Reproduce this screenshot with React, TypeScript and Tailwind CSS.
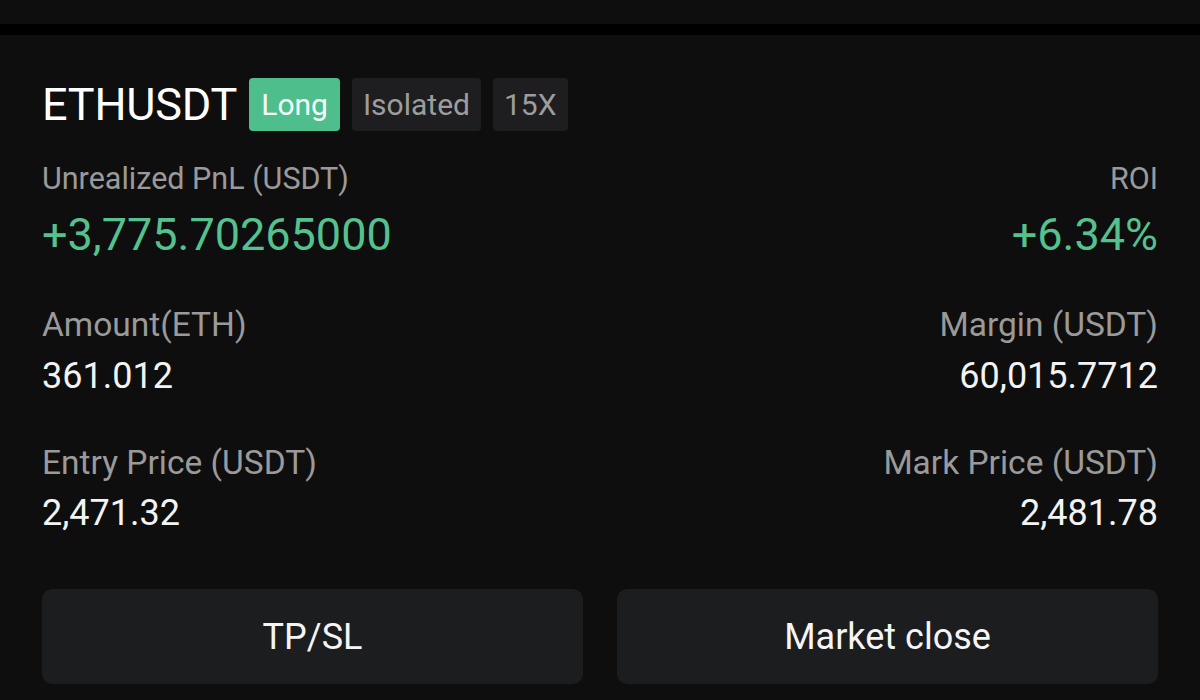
import React from "react";

const F = { fontFamily: "Roboto, 'Noto Sans', sans-serif" };

function Stat({
  label,
  value,
  right,
  green,
  big,
  labelCls,
  gapCls,
}: {
  label: string;
  value: string;
  right?: boolean;
  green?: boolean;
  big?: boolean;
  labelCls: string;
  gapCls: string;
}) {
  return (
    <div className={`flex flex-col ${right ? "items-end" : "items-start"}`}>
      <div className={`${labelCls} text-[#9a9a9a] whitespace-nowrap`}>{label}</div>
      <div
        className={`${big ? "text-[45px] leading-[50px]" : "text-[36px] leading-[42px]"} ${gapCls} ${
          green ? "text-[#54c18f]" : "text-[#f3f3f3]"
        } whitespace-nowrap`}
      >
        {value}
      </div>
    </div>
  );
}

export default function App() {
  return (
    <div className="w-[1200px] h-[700px] bg-[#0e0e0e] overflow-hidden flex flex-col" style={F}>
      <div className="h-[24px] bg-[#0e0e0e]" />
      <div className="h-[11px] bg-black" />
      <div className="flex-1 px-[42px] pt-[43px]">
        <div className="flex items-center h-[53px]">
          <div className="text-[45px] leading-[53px] text-white mr-[12px] tracking-[-0.2px]">ETHUSDT</div>
          <div className="h-[53px] px-[12px] rounded-[4px] bg-[#4ebe8c] text-[#f4fff9] text-[30px] flex items-center">Long</div>
          <div className="h-[53px] px-[11px] ml-[12px] rounded-[4px] bg-[#1e1e20] text-[#9d9d9d] text-[30px] flex items-center">Isolated</div>
          <div className="h-[53px] px-[11px] ml-[12px] rounded-[4px] bg-[#1e1e20] text-[#9d9d9d] text-[30px] flex items-center">15X</div>
        </div>
        <div className="flex justify-between mt-[30px]">
          <Stat label="Unrealized PnL (USDT)" value="+3,775.70265000" green big labelCls="text-[30.5px] leading-[36px]" gapCls="mt-[13px]" />
          <Stat label="ROI" value="+6.34%" right green big labelCls="text-[30.5px] leading-[36px]" gapCls="mt-[13px]" />
        </div>
        <div className="flex justify-between mt-[45px]">
          <Stat label="Amount(ETH)" value="361.012" labelCls="text-[33.5px] leading-[40px]" gapCls="mt-[10px]" />
          <Stat label="Margin (USDT)" value="60,015.7712" right labelCls="text-[33.5px] leading-[40px]" gapCls="mt-[10px]" />
        </div>
        <div className="flex justify-between mt-[46px]">
          <Stat label="Entry Price (USDT)" value="2,471.32" labelCls="text-[33.5px] leading-[40px]" gapCls="mt-[9px]" />
          <Stat label="Mark Price (USDT)" value="2,481.78" right labelCls="text-[33.5px] leading-[40px]" gapCls="mt-[9px]" />
        </div>
        <div className="grid grid-cols-2 gap-[34px] mt-[55px]">
          <button className="h-[95px] rounded-[10px] bg-[#1c1d1f] text-[#f5f5f5] text-[36px]">TP/SL</button>
          <button className="h-[95px] rounded-[10px] bg-[#1c1d1f] text-[#f5f5f5] text-[36px]">Market close</button>
        </div>
      </div>
    </div>
  );
}
